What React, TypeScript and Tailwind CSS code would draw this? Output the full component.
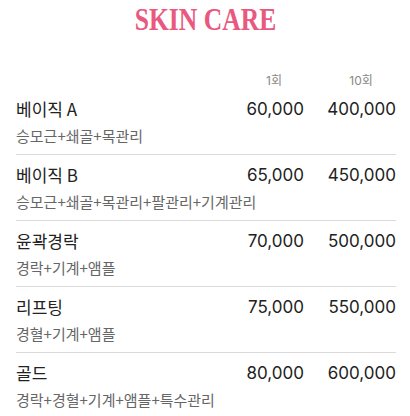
import React from 'react';

const items = [
  { name: '베이직 A', desc: '승모근+쇄골+목관리', p1: '60,000', p10: '400,000' },
  { name: '베이직 B', desc: '승모근+쇄골+목관리+팔관리+기계관리', p1: '65,000', p10: '450,000' },
  { name: '윤곽경락', desc: '경락+기계+앰플', p1: '70,000', p10: '500,000' },
  { name: '리프팅', desc: '경혈+기계+앰플', p1: '75,000', p10: '550,000' },
  { name: '골드', desc: '경락+경혈+기계+앰플+특수관리', p1: '80,000', p10: '600,000' },
];

const App = () => {
  return (
    <div className="w-[410px] h-[416px] bg-white overflow-hidden font-['Noto_Sans_CJK_KR',sans-serif]">
      {/* 제목 */}
      <h1 className="pt-px h-[36px] text-center font-['Liberation_Serif',serif] font-bold text-[32px] leading-[36px] text-[#e9587e]">
        <span className="inline-block scale-x-[0.8]">SKIN CARE</span>
      </h1>

      <div className="pl-4 pr-[14px] mt-[37px]">
        <div className="flex justify-end gap-[22px] text-[12px] leading-4 text-[#888] font-['Inter','Noto_Sans_CJK_KR',sans-serif]">
          <span className="w-[60px] text-center">1회</span>
          <span className="w-[70px] text-center">10회</span>
        </div>

        {items.map((item, i) => (
          <div
            key={item.name}
            className={`pt-[7px] pb-[7px] ${i < items.length - 1 ? 'border-b border-[#dadada]' : ''}`}
          >
            <div className="flex items-center text-[17px] leading-[26px] text-[#222]">
              <span className="flex-1">{item.name}</span>
              <span className="w-[60px] text-right font-['Inter',sans-serif]">{item.p1}</span>
              <span className="w-[70px] ml-[22px] text-right font-['Inter',sans-serif]">{item.p10}</span>
            </div>
            <div className="mt-[3px] text-[15px] leading-[22px] text-[#666]">{item.desc}</div>
          </div>
        ))}
      </div>
    </div>
  );
};

export default App;
